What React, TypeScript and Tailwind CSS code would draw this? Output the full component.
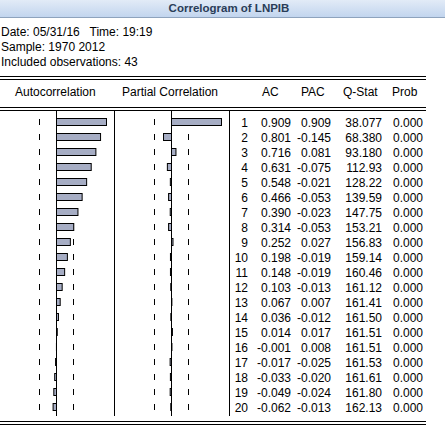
const rows: [number, number, number, string][] = [
  [1, 0.909, 0.909, "38.077"],
  [2, 0.801, -0.145, "68.380"],
  [3, 0.716, 0.081, "93.180"],
  [4, 0.631, -0.075, "112.93"],
  [5, 0.548, -0.021, "128.22"],
  [6, 0.466, -0.053, "139.59"],
  [7, 0.39, -0.023, "147.75"],
  [8, 0.314, -0.053, "153.21"],
  [9, 0.252, 0.027, "156.83"],
  [10, 0.198, -0.019, "159.14"],
  [11, 0.148, -0.019, "160.46"],
  [12, 0.103, -0.013, "161.12"],
  [13, 0.067, 0.007, "161.41"],
  [14, 0.036, -0.012, "161.50"],
  [15, 0.014, 0.017, "161.51"],
  [16, -0.001, 0.008, "161.51"],
  [17, -0.017, -0.025, "161.53"],
  [18, -0.033, -0.02, "161.61"],
  [19, -0.049, -0.024, "161.80"],
  [20, -0.062, -0.013, "162.13"],
];

const fmt = (v: number) => v.toFixed(3);

// bar chart for one correlation column, 55px per unit
const Panel = ({ values }: { values: number[] }) => {
  return (
    <div className="w-[115px] h-[305px] border-r border-black shrink-0">
      <svg width="114" height="305" className="block">
        <rect x={56} y={0} width={1} height={305} fill="#000" />
        {values.map((v, i) => {
          const top = 5 + i * 15;
          const w = v * 55;
          return (
            <g key={i}>
              <rect x={39} y={top + 3} width={1} height={6} fill="#000" />
              <rect x={73} y={top + 3} width={1} height={6} fill="#000" />
              <rect
                x={w > 0 ? 56.5 : 56.5 + w}
                y={top + 2.5}
                width={Math.abs(w)}
                height={7}
                fill="#a6adc4"
                stroke="#000"
              />
            </g>
          );
        })}
      </svg>
    </div>
  );
};

const DoubleLine = ({ className = "" }: { className?: string }) => (
  <div className={`h-[4px] border-y border-black ${className}`} />
);

const App = () => {
  return (
    <div className="w-[445px] h-[443px] bg-white font-['Liberation_Sans',Arial,sans-serif] text-[12px] leading-[15px] text-black">
      <div className="h-[18px] pl-[13px] border-b border-[#8ea3bd] bg-linear-to-b from-[#e2ebf7] to-[#c2d5ee] text-center font-bold text-[11.5px] text-[#2a3d58] leading-[17px]">
        Correlogram of LNPIB
      </div>
      <div className="pl-[1px] pt-[7px] whitespace-pre">
        <div>Date: 05/31/16   Time: 19:19</div>
        <div>Sample: 1970 2012</div>
        <div>Included observations: 43</div>
      </div>
      <div className="w-[426px] mt-[6px]">
        <DoubleLine />
        <div className="flex h-[27px] pt-[5px]">
          <div className="w-[115px] pl-[15px]">Autocorrelation</div>
          <div className="w-[115px] pl-[7px]">Partial Correlation</div>
          <div className="grid grid-cols-[32px_39px_42px_49px_1fr]">
            <span />
            <span>AC</span>
            <span>PAC</span>
            <span>Q-Stat</span>
            <span>Prob</span>
          </div>
        </div>
        <DoubleLine />
        <div className="flex">
          <Panel values={rows.map((r) => r[1])} />
          <Panel values={rows.map((r) => r[2])} />
          <div className="pt-[5px]">
            {rows.map(([lag, ac, pac, q]) => (
              <div
                key={lag}
                className="grid grid-cols-[18px_43px_40px_51px_41px] text-right"
              >
                <span>{lag}</span>
                <span>{fmt(ac)}</span>
                <span>{fmt(pac)}</span>
                <span>{q}</span>
                <span>0.000</span>
              </div>
            ))}
          </div>
        </div>
        <DoubleLine className="mt-[5px]" />
      </div>
    </div>
  );
};

export default App;
